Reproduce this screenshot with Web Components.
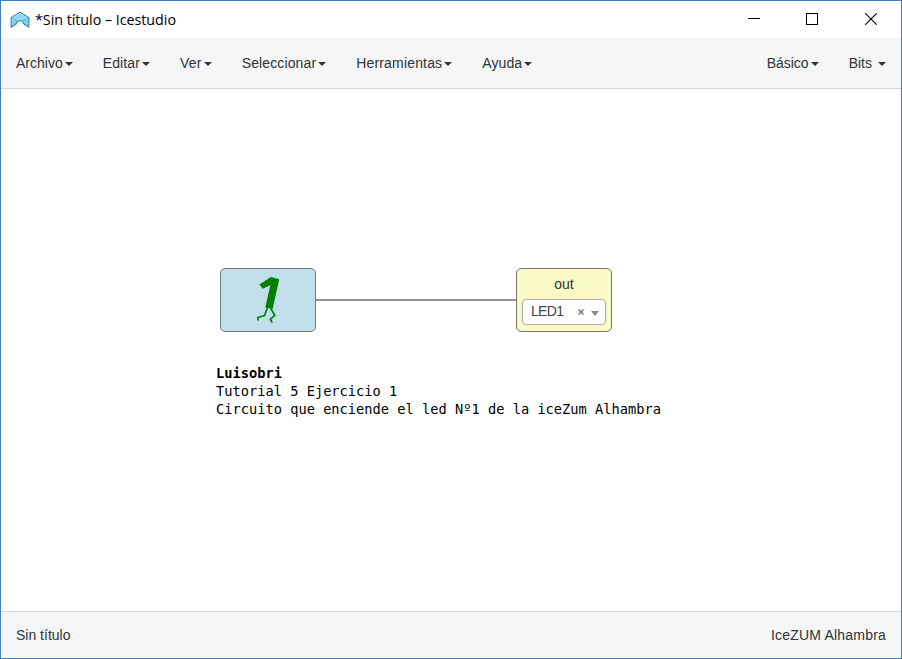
<!DOCTYPE html>
<html lang="es">
<head>
<meta charset="utf-8">
<title>Icestudio</title>
<style>
html, body { margin: 0; height: 100%; }
body { font: 14px/20px "Liberation Sans", Arial, sans-serif; color: #333; background: #fff; overflow: hidden; }
</style>
</head>
<body>
<ice-window>
  <ice-titlebar slot="title">*Sin título – Icestudio</ice-titlebar>
  <ice-bar slot="menu">
    <ice-menu>Archivo</ice-menu>
    <ice-menu style="--track:.14px">Editar</ice-menu>
    <ice-menu style="--track:.2px">Ver</ice-menu>
    <ice-menu style="--track:.12px">Seleccionar</ice-menu>
    <ice-menu style="--track:.17px">Herramientas</ice-menu>
    <ice-menu style="--track:.1px">Ayuda</ice-menu>
    <ice-menu slot="end">Básico</ice-menu>
    <ice-menu slot="end" class="spaced">Bits</ice-menu>
  </ice-bar>
  <ice-canvas>
    <ice-wire></ice-wire>
    <ice-constant></ice-constant>
    <ice-output pin="LED1">out</ice-output>
    <ice-note heading="Luisobri">Tutorial 5 Ejercicio 1
Circuito que enciende el led Nº1 de la iceZum Alhambra</ice-note>
  </ice-canvas>
  <ice-status slot="status">
    <span>Sin título</span>
    <span slot="end" style="letter-spacing:.2px">IceZUM Alhambra</span>
  </ice-status>
</ice-window>
<script>
function define(name, html) {
  const template = document.createElement('template');
  template.innerHTML = html;
  customElements.define(name, class extends HTMLElement {
    constructor() {
      super();
      this.attachShadow({ mode: 'open' }).append(template.content.cloneNode(true));
    }
    connectedCallback() {
      this.shadowRoot.querySelectorAll('[data-attr]').forEach(el => {
        el.textContent = this.getAttribute(el.dataset.attr);
      });
    }
  });
}

define('ice-window', `
<style>
:host { display: grid; grid-template-rows: 37px 51px 1fr 47px; box-sizing: border-box; height: 659px; width: 902px; border: 1px solid #447ebf; background: #fff; }
</style>
<slot name="title"></slot><slot name="menu"></slot><slot></slot><slot name="status"></slot>`);

define('ice-titlebar', `
<style>
:host { display: flex; align-items: center; color: #000; padding-left: 9px; font: 14.3px/20px "Open Sans", "Noto Sans", sans-serif; }
.logo { flex: none; margin-right: 5px; }
.name { flex: 1; letter-spacing: -0.03px; white-space: nowrap; }
.controls { display: flex; gap: 46px; margin: -1px 24px 0 0; }
svg { display: block; }
</style>
<svg class="logo" width="20" height="18" viewBox="0 0 20 18">
  <path d="M1 6.500 10 1l9 5.500v10l-5.500-3.500-1-2.500L10 9.500l-2.500 1-1 2.500L1 16.500z" fill="#84d2f3"/>
  <path d="M1 6.500 10 1l9 5.500-7.500 3.500L10 9l-1.500 1z" fill="#94daf7"/>
  <path d="M1 6.500 10 1l9 5.500v10l-5.500-3.500-1-2.500L10 9.500l-2.500 1-1 2.500L1 16.500z" fill="none" stroke="#22566c" stroke-width="1" stroke-dasharray="1.500 .6"/>
  <path d="M1 6.500 8 10.500M19 6.500l-7 4M1 16l6-5.500M19 16l-6-5.500" fill="none" stroke="#4ba8cf" stroke-width=".8"/>
</svg>
<span class="name"><slot></slot></span>
<span class="controls">
  <svg width="12" height="12" viewBox="0 0 12 12" shape-rendering="crispEdges"><path d="M0 5.500h12" stroke="#000"/></svg>
  <svg width="12" height="12" viewBox="0 0 12 12" shape-rendering="crispEdges"><path d="M.5.5h11v11H.5z" fill="none" stroke="#000"/></svg>
  <svg width="13" height="12" viewBox="0 0 13 12"><path d="M1.200.2 12.800 11.800M12.800.2 1.200 11.800" stroke="#000" stroke-width="1.100"/></svg>
</span>`);

define('ice-bar', `
<style>
:host { display: flex; justify-content: space-between; align-items: center; box-sizing: border-box; background: #f4f6f8; border-bottom: 1px solid #d3d8db; padding: 0 15px; }
nav { display: flex; gap: 30px; }
</style>
<nav><slot></slot></nav><nav><slot name="end"></slot></nav>`);

define('ice-menu', `
<style>
:host { display: flex; align-items: center; white-space: nowrap; }
span { letter-spacing: var(--track, 0); }
i { width: 0; height: 0; margin: 2px 0 0 2px; border: 4px solid transparent; border-top-color: #333; border-bottom: 0; }
:host(.spaced) i { margin-left: 6px; }
</style>
<span><slot></slot></span><i></i>`);

define('ice-status', `
<style>
:host { display: flex; justify-content: space-between; align-items: center; box-sizing: border-box; background: #f4f6f8; border-top: 1px solid #d3d8db; padding: 0 15px; }
</style>
<slot></slot><slot name="end"></slot>`);

/* Free diagram surface: each node sets its own place on it. */
define('ice-canvas', `
<style>:host { display: block; position: relative; overflow: hidden; }</style><slot></slot>`);

define('ice-wire', `
<style>:host { position: absolute; left: 314px; top: 210px; width: 202px; height: 2px; background: #949494; }</style>`);

define('ice-constant', `
<style>
:host { position: absolute; left: 219px; top: 179px; box-sizing: border-box; width: 96px; height: 64px; border: 1px solid #777; border-radius: 5px; background: #c0dfeb; }
svg { display: block; }
</style>
<svg width="94" height="62" viewBox="0 0 94 62">
  <path d="M50 8 58.200 10.300 51.700 39.800 44.300 38.500 49.300 16.300 41.700 19.700 38.300 15.500z" fill="#008000"/>
  <path d="M46.500 38.500 43.500 46.500 36.800 48.500 37.200 51.500M49.500 39 53.800 46.300 49.200 50.300 51.200 53.500" fill="none" stroke="#008000" stroke-width="1.700"/>
</svg>`);

define('ice-output', `
<style>
:host { position: absolute; left: 515px; top: 179px; box-sizing: border-box; width: 96px; height: 64px; border: 1px solid #777; border-radius: 5px; background: #fafac8; display: flex; flex-direction: column; padding: 5px; }
.label { text-align: center; height: 25px; }
.select { display: flex; align-items: center; box-sizing: border-box; height: 26px; border: 1px solid #aaa; border-radius: 4px; background: #fff; padding: 0 6px 0 8px; color: #444; }
.pin { flex: 1; line-height: 22px; padding-bottom: 2px; letter-spacing: -.7px; }
.clear { margin-right: 6px; }
.arrow { margin-top: 3px; width: 0; height: 0; border: 4.500px solid transparent; border-top: 5px solid #888; border-bottom: 0; }
</style>
<div class="label"><slot></slot></div>
<div class="select"><span class="pin" data-attr="pin"></span>
<svg class="clear" width="8" height="8" viewBox="0 0 8 8"><path d="M1.500 1.500l5 5M6.500 1.500l-5 5" stroke="#777" stroke-width="1.500"/></svg>
<i class="arrow"></i></div>`);

define('ice-note', `
<style>
:host { position: absolute; left: 215px; top: 275px; color: #000; font: 13.7px/18px "DejaVu Sans Mono", monospace; }
b { display: block; }
p { margin: 0; white-space: pre; }
</style><b data-attr="heading"></b><p><slot></slot></p>`);
</script>
</body>
</html>
